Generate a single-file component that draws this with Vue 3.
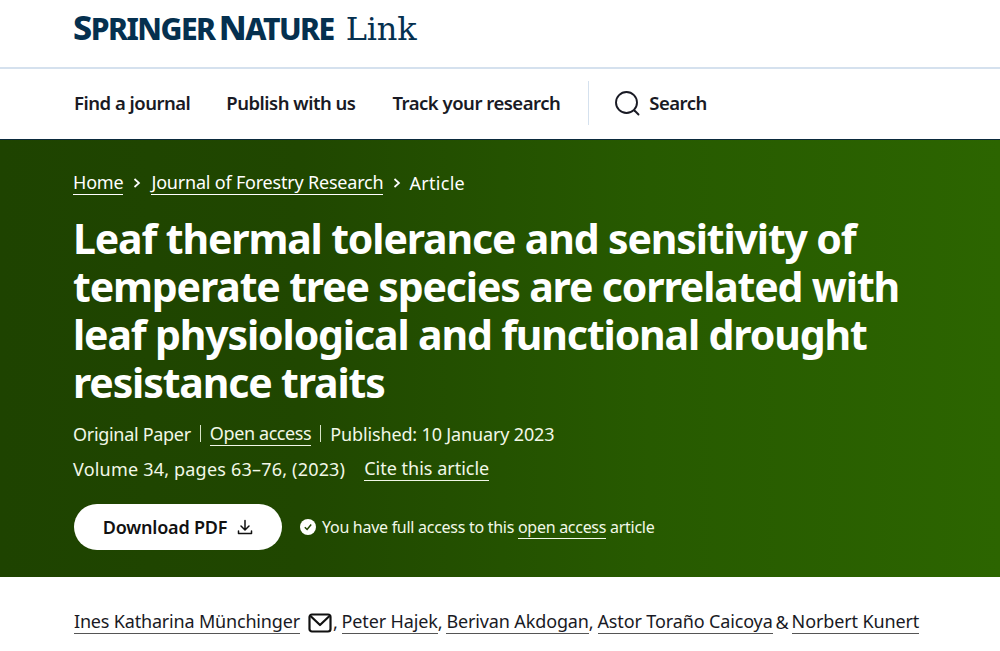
<script setup>
const navLinks = ['Find a journal', 'Publish with us', 'Track your research']
const authors = ['Peter Hajek', 'Berivan Akdogan', 'Astor Toraño Caicoya']
</script>

<template>
  <div class="page">
    <header class="logo-bar">
      <div class="logo">
        <span class="brand"><span class="cap">S</span>PRINGER <span class="cap">N</span>ATURE</span>
        <span class="link-word">Link</span>
      </div>
    </header>

    <nav class="nav">
      <a v-for="link in navLinks" :key="link" class="nav-link">{{ link }}</a>
      <span class="divider"></span>
      <a class="search">
        <svg width="26" height="26" viewBox="0 0 26 26" fill="none" stroke="#191a24" stroke-width="1.9" stroke-linecap="round">
          <circle cx="12.5" cy="12.5" r="10.5" />
          <path d="M20.5 20.5 L24.5 24.5" />
        </svg>
        Search
      </a>
    </nav>

    <section class="hero">
      <div class="crumbs">
        <a class="u">Home</a>
        <svg class="chev" width="8" height="12" viewBox="0 0 8 12" fill="none" stroke="#fff" stroke-width="1.7"><path d="M1.5 2 L6 6 L1.5 10" /></svg>
        <a class="u">Journal of Forestry Research</a>
        <svg class="chev" width="8" height="12" viewBox="0 0 8 12" fill="none" stroke="#fff" stroke-width="1.7"><path d="M1.5 2 L6 6 L1.5 10" /></svg>
        <span class="article">Article</span>
      </div>

      <h1>Leaf thermal tolerance and sensitivity of temperate tree species are correlated with leaf physiological and functional drought resistance traits</h1>

      <div class="meta">
        <span>Original Paper</span>
        <i class="bar"></i>
        <a class="u">Open access</a>
        <i class="bar"></i>
        <span class="published">Published: 10 January 2023</span>
      </div>
      <div class="meta second">
        <span class="volume">Volume 34, pages 63–76, (2023)</span>
        <a class="u cite">Cite this article</a>
      </div>

      <div class="actions">
        <a class="download">
          Download PDF
          <svg width="16" height="16" viewBox="0 0 16 16" fill="none" stroke="#111" stroke-width="1.5" stroke-linecap="round" stroke-linejoin="round">
            <path d="M8 1.5 V10.5 M4 7 L8 11 L12 7 M1.5 12 V14.5 H14.5 V12" />
          </svg>
        </a>
        <svg class="tick" width="16" height="16" viewBox="0 0 16 16">
          <circle cx="8" cy="8" r="8" fill="#fff" />
          <path d="M4.8 8.2 L7.1 10.5 L11.2 5.6" fill="none" stroke="#1f4400" stroke-width="1.5" />
        </svg>
        <span class="access">You have full access to this <a class="u">open access</a> article</span>
      </div>
    </section>

    <div class="authors">
      <a class="au">Ines Katharina Münchinger</a>
      <svg class="mail" width="24" height="20" viewBox="0 0 24 20" fill="none" stroke="#111" stroke-width="2.2" stroke-linejoin="round">
        <rect x="1.5" y="1.5" width="21" height="17" rx="2.5" />
        <path d="M2.5 3 L12 12 L21.5 3" />
      </svg>
      <span class="sep">,</span>
      <template v-for="(name, i) in authors" :key="name">
        <a class="au wider">{{ name }}</a>
        <span v-if="i < authors.length - 1" class="sep">,</span>
      </template>
      <span class="amp">&amp;</span>
      <a class="au wider">Norbert Kunert</a>
    </div>
  </div>
</template>

<style>
html, body {
  margin: 0;
  background: #fff;
  overflow: hidden;
}
</style>

<style scoped>
.page {
  height: 651px;
  overflow: hidden;
  font-family: "Noto Sans", "Open Sans", sans-serif;
  color: #191a24;
}

.logo-bar {
  box-sizing: border-box;
  border-bottom: 2px solid #d5e1ee;
  height: 69px;
  padding: 0 73px;
}

.logo {
  display: flex;
  align-items: baseline;
  color: #05304f;
  white-space: nowrap;
  line-height: 54px;
}

.brand {
  font-weight: 800;
  font-size: 30px;
  letter-spacing: -1.5px;
  word-spacing: -2px;
}

.cap {
  font-size: 34px;
}

.link-word {
  font-family: "DejaVu Serif", "Liberation Serif", serif;
  font-size: 32px;
  margin-left: 12px;
  letter-spacing: -0.2px;
}

.nav {
  height: 71px;
  box-sizing: border-box;
  border-bottom: 1px solid #0b2a3d;
  padding: 0 0 4px 74px;
  display: flex;
  align-items: center;
  font-weight: 600;
  font-size: 18.5px;
  letter-spacing: -0.5px;
}

.nav-link {
  margin-right: 36px;
}

.nav-link:nth-child(2) {
  margin-right: 37px;
}

.nav-link:nth-child(3) {
  margin-right: 28px;
}

.divider {
  width: 1px;
  height: 44px;
  background: #d5e1ee;
  margin: 2px 25px 0 0;
}

.search {
  display: flex;
  align-items: center;
  gap: 9px;
}

.search svg {
  margin-top: 2px;
}

.hero {
  height: 437px;
  box-sizing: border-box;
  padding: 31px 73px 0;
  background: linear-gradient(90deg, #1e4300 0%, #204700 30%, #275a00 65%, #2c6500 100%);
  color: #fff;
}

.u {
  border-bottom: 1px solid currentColor;
}

.crumbs {
  display: flex;
  align-items: center;
  font-size: 18px;
  letter-spacing: -0.2px;
  line-height: 24px;
}

.crumbs .u {
  line-height: 23px;
}

.article {
  letter-spacing: 0.3px;
  margin-left: -2px;
}

.chev {
  margin: 0 10px;
}

h1 {
  margin: 19px 0 0;
  font-size: 41px;
  line-height: 48px;
  font-weight: 700;
  letter-spacing: -1.15px;
  width: 860px;
}

.meta {
  display: flex;
  align-items: center;
  margin-top: 15px;
  font-size: 18px;
  letter-spacing: -0.3px;
  line-height: 24px;
  color: #f2f8e8;
}

.meta.second {
  margin-top: 10px;
}

.meta .u {
  letter-spacing: -0.4px;
}

.published {
  letter-spacing: -0.15px;
}

.volume {
  letter-spacing: 0.2px;
}

.bar {
  width: 1px;
  height: 17px;
  background: #d8e4c8;
  margin: 0 9px;
}

.meta .cite {
  margin-left: 19px;
  letter-spacing: 0;
}

.actions {
  display: flex;
  align-items: center;
  margin: 23px 0 0 1px;
}

.download {
  width: 208px;
  height: 46px;
  border-radius: 23px;
  background: #fff;
  color: #111;
  font-weight: 600;
  font-size: 18px;
  letter-spacing: -0.2px;
  display: flex;
  align-items: center;
  justify-content: center;
  gap: 10px;
  margin-right: 18px;
}

.tick {
  margin-right: 6px;
}

.access {
  font-size: 16px;
  letter-spacing: -0.28px;
  color: #f2f8e8;
}

.authors {
  display: flex;
  align-items: center;
  padding: 33px 0 0 74px;
  font-size: 18px;
  letter-spacing: -0.18px;
  white-space: nowrap;
}

.au {
  border-bottom: 1px solid #555;
  line-height: 23px;
}

.wider {
  letter-spacing: -0.13px;
}

.mail {
  margin: 2px 1px 0 8px;
}

.sep {
  margin-right: 4px;
}

.amp {
  margin: 0 3px;
}
</style>
